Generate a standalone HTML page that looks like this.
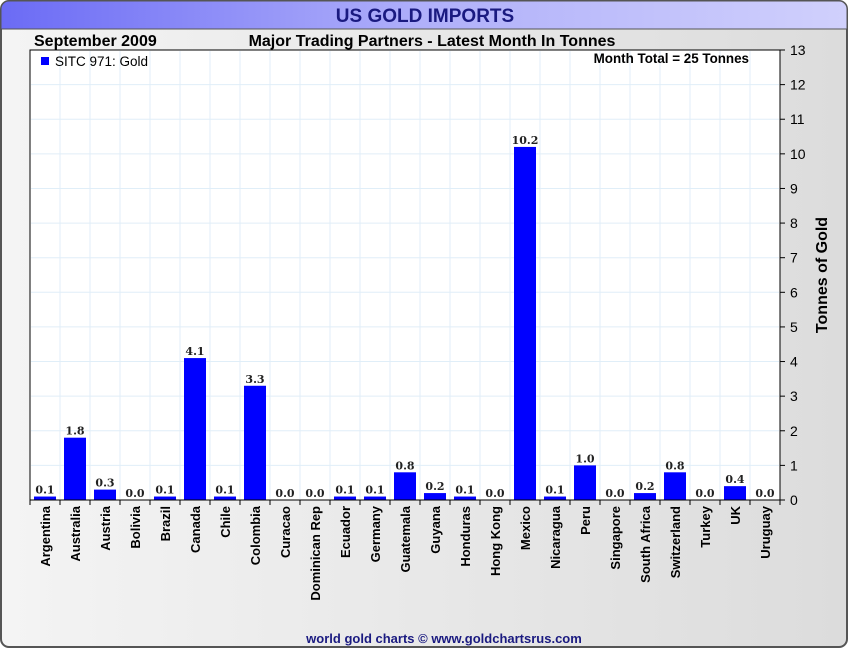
<!DOCTYPE html>
<html><head><meta charset="utf-8"><style>
body{margin:0;width:850px;height:650px;overflow:hidden;background:#fff;font-family:"Liberation Sans",sans-serif}
</style></head><body>
<svg width="850" height="650" xmlns="http://www.w3.org/2000/svg" font-family="Liberation Sans, sans-serif">
<defs>
<linearGradient id="bg" x1="0" x2="1"><stop offset="0" stop-color="#f4f4f4"/><stop offset="1" stop-color="#dcdcdc"/></linearGradient>
<linearGradient id="hd" x1="0" x2="1"><stop offset="0" stop-color="#6b6bf5"/><stop offset="0.5" stop-color="#b0b0fa"/><stop offset="1" stop-color="#d0d0fc"/></linearGradient>
</defs>
<rect x="1" y="1" width="846" height="646" rx="8" fill="url(#bg)" stroke="#555" stroke-width="2"/>
<path d="M1 9 a8 8 0 0 1 8 -8 H839 a8 8 0 0 1 8 8 V29 H1 Z" fill="url(#hd)" stroke="#555" stroke-width="1"/>
<line x1="2" y1="29" x2="846" y2="29" stroke="#555"/>
<text x="425" y="22" text-anchor="middle" font-size="19" font-weight="bold" fill="#1a1a80">US GOLD IMPORTS</text>
<text x="34" y="46" font-size="16" font-weight="bold" fill="#000">September 2009</text>
<text x="432" y="46" text-anchor="middle" font-size="16" font-weight="bold" fill="#000">Major Trading Partners - Latest Month In Tonnes</text>
<rect x="30" y="50" width="750" height="450" fill="#fff" stroke="#000"/>
<g stroke="#e0eef8" stroke-width="1" id="grid"></g>
<rect x="41" y="57" width="8" height="8" fill="#0000ff"/>
<text x="55" y="66" font-size="13.5" fill="#000">SITC 971: Gold</text>
<text x="749" y="63" text-anchor="end" font-size="13.4" font-weight="bold" fill="#000">Month Total = 25 Tonnes</text>
<g id="bars"></g>
<text transform="translate(827,275) rotate(-90)" text-anchor="middle" font-size="16" font-weight="bold">Tonnes of Gold</text>
<text x="444" y="643" text-anchor="middle" font-size="13" font-weight="bold" fill="#1a1a80">world gold charts © www.goldchartsrus.com</text>
<script>
var ns="http://www.w3.org/2000/svg";
function el(t,a,p,txt){var e=document.createElementNS(ns,t);for(var k in a)e.setAttribute(k,a[k]);if(txt!==undefined)e.textContent=txt;(p||document.querySelector('svg')).appendChild(e);return e;}
var g=document.getElementById('grid'),b=document.getElementById('bars');
var u=450/13;
for(var i=1;i<25;i++)el('line',{x1:30+30*i,y1:51,x2:30+30*i,y2:499},g);
for(var j=1;j<13;j++)el('line',{x1:31,y1:500-u*j,x2:779,y2:500-u*j},g);
var d=[["Argentina",0.1],["Australia",1.8],["Austria",0.3],["Bolivia",0],["Brazil",0.1],["Canada",4.1],["Chile",0.1],["Colombia",3.3],["Curacao",0],["Dominican Rep",0],["Ecuador",0.1],["Germany",0.1],["Guatemala",0.8],["Guyana",0.2],["Honduras",0.1],["Hong Kong",0],["Mexico",10.2],["Nicaragua",0.1],["Peru",1.0],["Singapore",0],["South Africa",0.2],["Switzerland",0.8],["Turkey",0],["UK",0.4],["Uruguay",0]];
d.forEach(function(r,i){var cx=45+30*i,h=r[1]*u;
if(h>0)el('rect',{x:cx-11,y:500-h,width:22,height:h,fill:'#0000ff'},b);
el('text',{x:cx,y:500-h-3,'text-anchor':'middle','font-size':11,'font-weight':'bold','font-family':'DejaVu Serif, serif',fill:'#222'},b,r[1].toFixed(1));
el('text',{transform:'translate('+(cx+5)+',506) rotate(-90)','text-anchor':'end','font-size':13,'font-weight':'bold',fill:'#000'},b,r[0]);
});
for(var i=0;i<=25;i++)el('line',{x1:30+30*i,y1:500,x2:30+30*i,y2:505,stroke:'#000'},b);
for(var j=0;j<=13;j++){var y=500-u*j;el('line',{x1:780,y1:y,x2:785,y2:y,stroke:'#000'},b);
el('text',{x:790,y:y+5,'font-size':14,fill:'#000'},b,String(j));}
el('line',{x1:30,y1:500,x2:780,y2:500,stroke:'#000'},b);
el('line',{x1:780,y1:50,x2:780,y2:500,stroke:'#000'},b);
</script>
</svg>
</body></html>
